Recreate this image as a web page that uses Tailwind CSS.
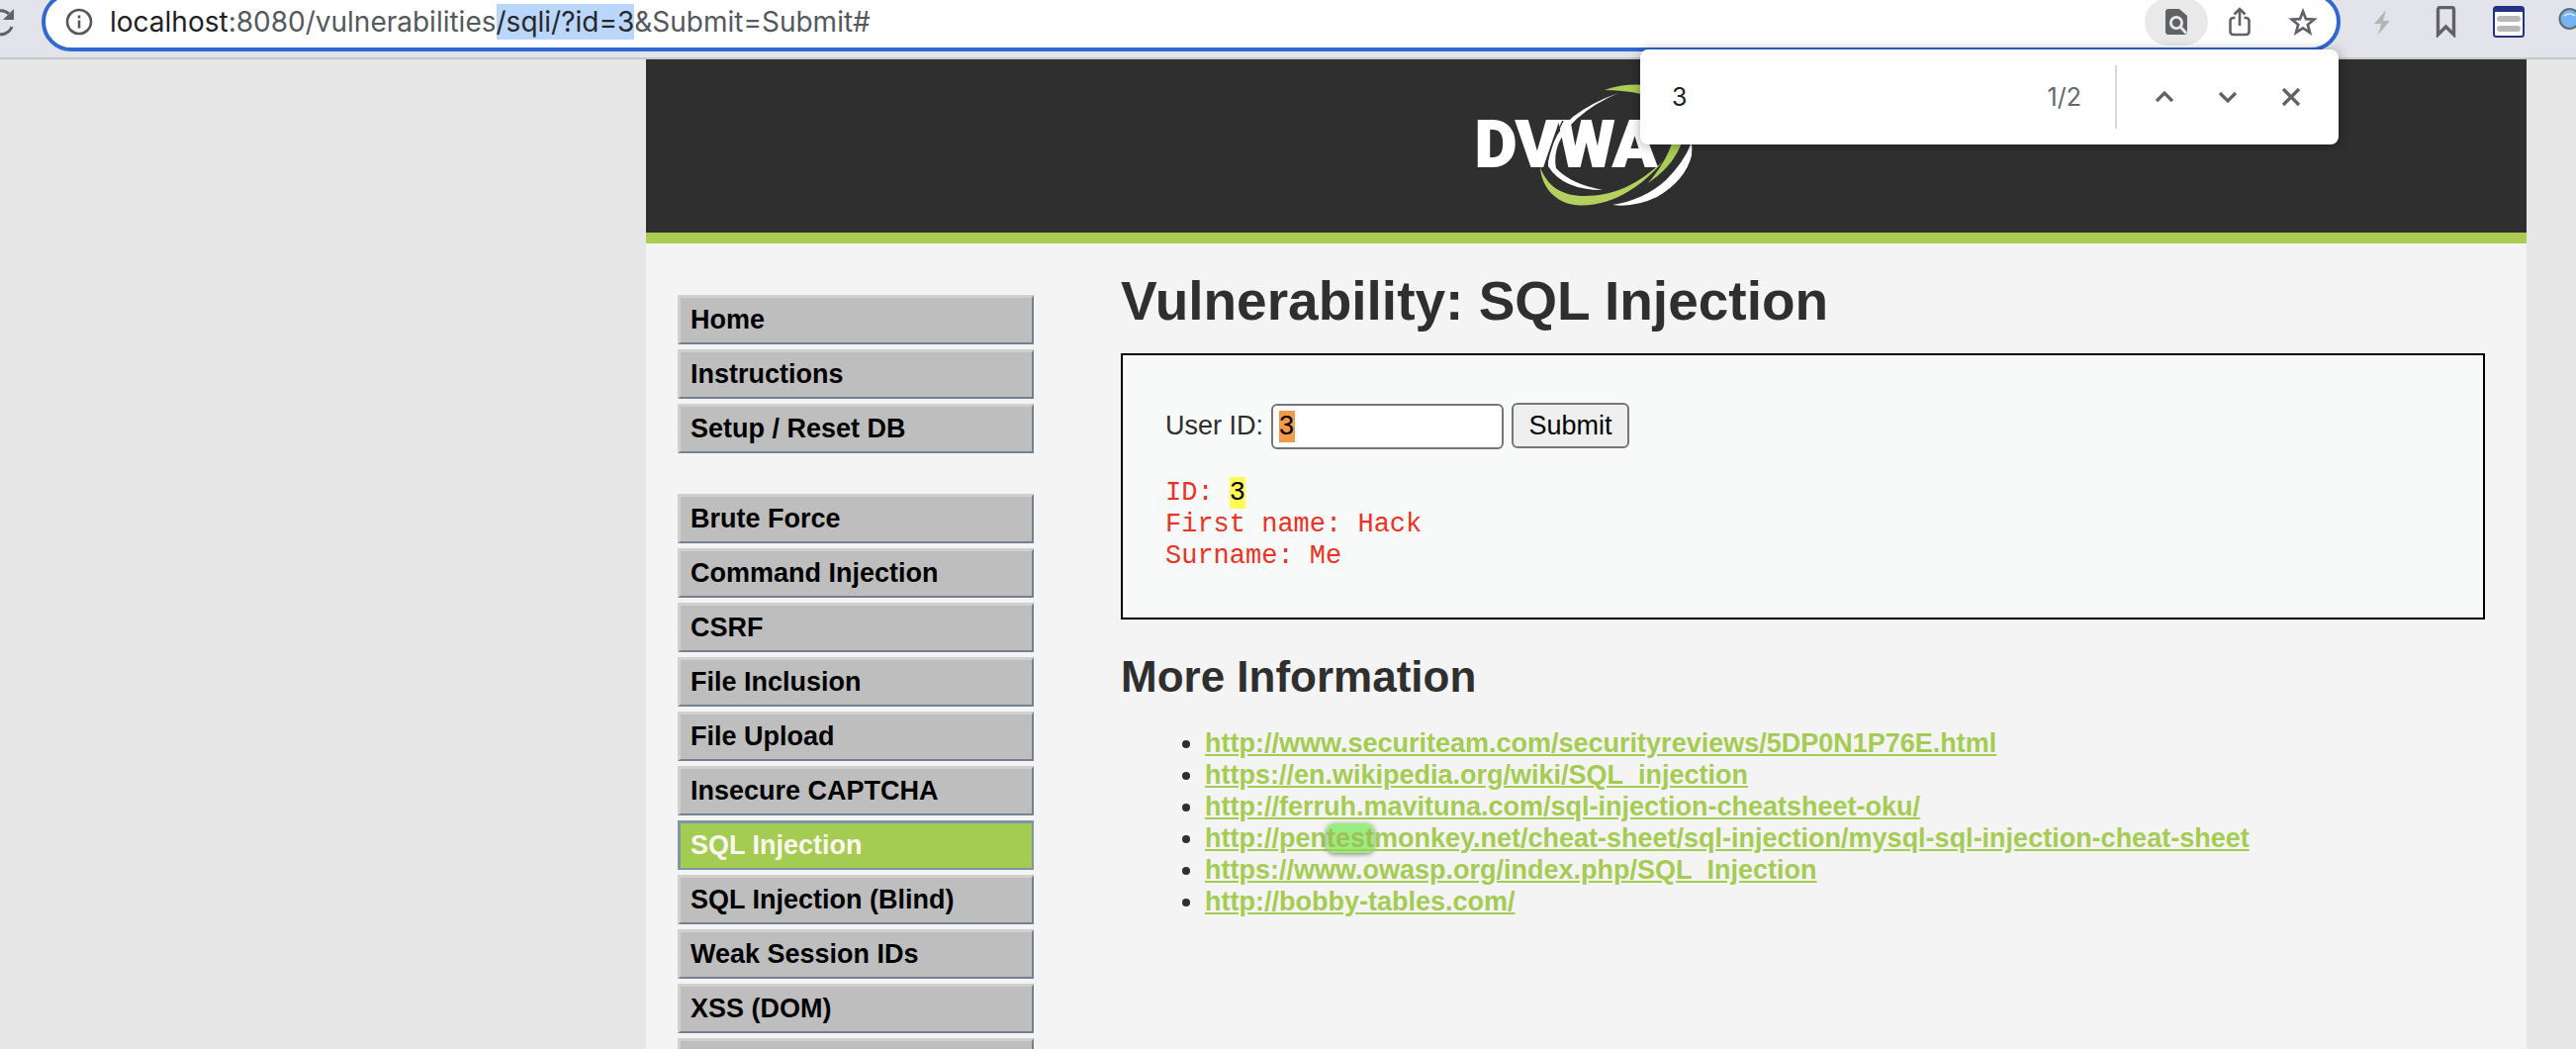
<!DOCTYPE html>
<html lang="en">
<head>
<meta charset="utf-8">
<title>Vulnerability: SQL Injection</title>
<script src="https://cdn.jsdelivr.net/npm/@tailwindcss/browser@4"></script>
</head>
<body class="flex h-screen flex-col overflow-hidden bg-[#e7e7e7] font-['Liberation_Sans',Arial,sans-serif] text-[27px] leading-8 text-[#2f2f2f]">

<!-- Browser toolbar -->
<div class="relative flex h-[60px] shrink-0 items-start border-b-2 border-[#c6c6cd] bg-[#e3e4eb] font-[Inter,sans-serif]">
  <button type="button" aria-label="Reload" class="h-11 w-[42px] shrink-0">
    <svg class="h-11 w-[42px]" viewBox="0 0 42 44" fill="none"><path d="M12 27A12 12 0 1 1 9 14" stroke="#5f6368" stroke-width="3"/><path d="M14 9v11H3z" fill="#5f6368"/></svg>
  </button>
  <div class="-mt-2 flex h-[60px] min-w-0 flex-1 items-center rounded-full border-4 border-[#3069cf] bg-white pr-0.5 pl-5">
    <button type="button" aria-label="View site information" class="mr-[17px] shrink-0">
      <svg class="size-7" viewBox="0 0 28 28" fill="none" stroke="#54575b"><circle cx="14" cy="14" r="12" stroke-width="2.6"/><path d="M14 12.5v8M14 7.5v3" stroke-width="2.6"/></svg>
    </button>
    <div role="textbox" contenteditable="true" spellcheck="false" aria-label="Address" class="flex-1 text-[28px] leading-9 whitespace-nowrap text-[#55585c] outline-none"><span class="text-[#1f2124]">localhost</span>:8080/vulnerabilities<span class="inline-block bg-[#bad6fb] text-[#26282c]">/sqli/?id=3</span>&amp;Submit=Submit#</div>
    <div class="flex shrink-0 items-center">
      <button type="button" aria-label="Find in page" class="flex h-12 w-16 items-center justify-center rounded-full bg-[#e9e9ea]">
        <svg class="size-8" viewBox="0 0 32 32"><path d="M8 3h11l8 7v16a3 3 0 0 1-3 3H8a3 3 0 0 1-3-3V6a3 3 0 0 1 3-3z" fill="#5f6368"/><circle cx="16" cy="17" r="5.6" fill="none" stroke="#e9e9ea" stroke-width="2.8"/><path d="M20 21l6 6.5" stroke="#e9e9ea" stroke-width="2.8"/></svg>
      </button>
      <button type="button" aria-label="Share" class="flex h-12 w-16 items-center justify-center">
        <svg class="size-8" viewBox="0 0 32 32" fill="none" stroke="#5f6368" stroke-width="2.6"><path d="M11.500 12H9.500a3 3 0 0 0-3 3v11a3 3 0 0 0 3 3h13a3 3 0 0 0 3-3V15a3 3 0 0 0-3-3h-2M16 20V4M10.500 8.500 16 3l5.500 5.500"/></svg>
      </button>
      <button type="button" aria-label="Bookmark this page" class="flex h-12 w-16 items-center justify-center">
        <svg class="size-8" viewBox="0 0 32 32" fill="none" stroke="#5f6368" stroke-width="2.7"><path d="M16 5.500l3 7.700 8.200.5-6.400 5.200 2.200 8-7-4.500-7 4.500 2.200-8-6.400-5.200 8.200-.5z"/></svg>
      </button>
    </div>
  </div>
  <div class="flex h-11 w-[238px] shrink-0 items-center overflow-hidden pl-[26px]">
    <button type="button" aria-label="Lightning extension" class="mr-8 shrink-0">
      <svg class="size-8" viewBox="0 0 32 32" fill="#b4b4b6"><path d="M20 4 8 18h7l-3 11 12-14h-7z"/></svg>
    </button>
    <button type="button" aria-label="Bookmark extension" class="mr-8 shrink-0">
      <svg class="size-8" viewBox="0 0 32 32" fill="none" stroke="#626262" stroke-width="3.4"><path d="M8.500 29V3.500a2 2 0 0 1 2-2h12a2 2 0 0 1 2 2V29l-8-8z"/></svg>
    </button>
    <button type="button" aria-label="Notes extension" class="mr-8 shrink-0">
      <svg class="size-8" viewBox="0 0 32 32"><rect x="1" y="1" width="30" height="30" rx="2.500" fill="#fff" stroke="#253187" stroke-width="2"/><path d="M1 1h30v5H1z" fill="#253187"/><path d="M7 13h18M7 23h18" stroke="#b8b8b8" stroke-width="6" stroke-linecap="round"/></svg>
    </button>
    <button type="button" aria-label="Search extension" class="shrink-0">
      <svg class="size-8" viewBox="0 0 32 32"><circle cx="13.500" cy="13" r="10" fill="#77b4f2" stroke="#5d6b78" stroke-width="2"/><path d="M8 10q5-4 11 0" fill="none" stroke="#d5e9ff" stroke-width="1.500"/></svg>
    </button>
  </div>

  <!-- Find bar floats over the page -->
  <div role="search" class="absolute top-[50px] right-[240px] z-10 flex h-24 w-[706px] items-center rounded-lg bg-white pr-4 pl-8 text-[25px] shadow-[0_1px_12px_rgba(0,0,0,0.35)]">
    <input type="text" aria-label="Find" value="3" class="min-w-0 flex-1 text-[#202124] outline-none">
    <output class="mr-[34px] text-[#66696d]">1/2</output>
    <div class="mr-4 h-16 w-0.5 bg-[#d9d9da]"></div>
    <button type="button" aria-label="Previous match" class="flex h-16 w-16 items-center justify-center"><svg class="size-8" viewBox="0 0 32 32" fill="none" stroke="#5f6368" stroke-width="3.200"><path d="M8 20l8-8 8 8"/></svg></button>
    <button type="button" aria-label="Next match" class="flex h-16 w-16 items-center justify-center"><svg class="size-8" viewBox="0 0 32 32" fill="none" stroke="#5f6368" stroke-width="3.200"><path d="M8 12l8 8 8-8"/></svg></button>
    <button type="button" aria-label="Close find bar" class="flex h-16 w-16 items-center justify-center"><svg class="size-8" viewBox="0 0 32 32" fill="none" stroke="#5f6368" stroke-width="3.200"><path d="M8 8l16 16M24 8 8 24"/></svg></button>
  </div>
</div>

<!-- Page -->
<div class="mr-[50px] ml-[653px] flex min-h-0 flex-1 flex-col bg-[#f4f4f4]">
  <header class="flex h-[186px] shrink-0 justify-center border-b-[11px] border-[#abcc50] bg-[#2f2f2f]">
    <svg class="h-[175px] w-[300px]" viewBox="-6 0 300 175" role="img" aria-label="DVWA">
      <path d="M176 34Q150 43 130 58Q104 82 105 108Q120 132 160 132Q128 126 113 110Q108 84 134 60Q152 44 176 34z" fill="#fff"/>
      <path d="M162 31Q182 24 204 26Q236 32 244 56Q246 98 206 125Q234 92 234 62Q226 32 162 31z" fill="#abcc55"/>
      <path d="M97 109C98 128 112 147 138 147.500C172 148 202 126 221 103C196 126 172 138 142 138C118 138 104 128 97 109z" fill="#b4d160"/>
      <path d="M249 86Q251 84 250 97Q244 122 215 139Q192 150 170 147Q202 142 224 122Q242 104 249 86z" fill="#fff"/>
      <text x="31" y="108" class="font-[Roboto,sans-serif] text-[65px] font-extrabold" fill="#fff" stroke="#fff" stroke-width="2">DVWA</text>
      <path d="M120 62Q108 84 103 108" fill="none" stroke="#2f2f2f" stroke-width="1.500"/>
    </svg>
  </header>

  <div class="flex min-h-0 flex-1 items-start pr-[42px] pl-8">
    <nav class="mt-[52px] mr-[88px] flex w-[360px] shrink-0 flex-col gap-[41px] text-[27px] font-bold text-black">
      <ul class="flex flex-col gap-[5px]">
        <li><a href="#" class="block h-[50px] border-t-3 border-r-2 border-b-2 border-l-3 border-t-[#d0d0d0] border-r-[#738093] border-b-[#738093] border-l-[#d0d0d0] bg-[#bebebe] px-[10px] py-[6px]">Home</a></li>
        <li><a href="#" class="block h-[50px] border-t-3 border-r-2 border-b-2 border-l-3 border-t-[#d0d0d0] border-r-[#738093] border-b-[#738093] border-l-[#d0d0d0] bg-[#bebebe] px-[10px] py-[6px]">Instructions</a></li>
        <li><a href="#" class="block h-[50px] border-t-3 border-r-2 border-b-2 border-l-3 border-t-[#d0d0d0] border-r-[#738093] border-b-[#738093] border-l-[#d0d0d0] bg-[#bebebe] px-[10px] py-[6px]">Setup / Reset DB</a></li>
      </ul>
      <ul class="flex flex-col gap-[5px]">
        <li><a href="#" class="block h-[50px] border-t-3 border-r-2 border-b-2 border-l-3 border-t-[#d0d0d0] border-r-[#738093] border-b-[#738093] border-l-[#d0d0d0] bg-[#bebebe] px-[10px] py-[6px]">Brute Force</a></li>
        <li><a href="#" class="block h-[50px] border-t-3 border-r-2 border-b-2 border-l-3 border-t-[#d0d0d0] border-r-[#738093] border-b-[#738093] border-l-[#d0d0d0] bg-[#bebebe] px-[10px] py-[6px]">Command Injection</a></li>
        <li><a href="#" class="block h-[50px] border-t-3 border-r-2 border-b-2 border-l-3 border-t-[#d0d0d0] border-r-[#738093] border-b-[#738093] border-l-[#d0d0d0] bg-[#bebebe] px-[10px] py-[6px]">CSRF</a></li>
        <li><a href="#" class="block h-[50px] border-t-3 border-r-2 border-b-2 border-l-3 border-t-[#d0d0d0] border-r-[#738093] border-b-[#738093] border-l-[#d0d0d0] bg-[#bebebe] px-[10px] py-[6px]">File Inclusion</a></li>
        <li><a href="#" class="block h-[50px] border-t-3 border-r-2 border-b-2 border-l-3 border-t-[#d0d0d0] border-r-[#738093] border-b-[#738093] border-l-[#d0d0d0] bg-[#bebebe] px-[10px] py-[6px]">File Upload</a></li>
        <li><a href="#" class="block h-[50px] border-t-3 border-r-2 border-b-2 border-l-3 border-t-[#d0d0d0] border-r-[#738093] border-b-[#738093] border-l-[#d0d0d0] bg-[#bebebe] px-[10px] py-[6px]">Insecure CAPTCHA</a></li>
        <li><a href="#" aria-current="page" class="block h-[50px] border-t-3 border-r-2 border-b-2 border-l-3 border-[#7f95a8] bg-[#a5cc52] px-[10px] py-[6px] text-[#faf8ee]">SQL Injection</a></li>
        <li><a href="#" class="block h-[50px] border-t-3 border-r-2 border-b-2 border-l-3 border-t-[#d0d0d0] border-r-[#738093] border-b-[#738093] border-l-[#d0d0d0] bg-[#bebebe] px-[10px] py-[6px]">SQL Injection (Blind)</a></li>
        <li><a href="#" class="block h-[50px] border-t-3 border-r-2 border-b-2 border-l-3 border-t-[#d0d0d0] border-r-[#738093] border-b-[#738093] border-l-[#d0d0d0] bg-[#bebebe] px-[10px] py-[6px]">Weak Session IDs</a></li>
        <li><a href="#" class="block h-[50px] border-t-3 border-r-2 border-b-2 border-l-3 border-t-[#d0d0d0] border-r-[#738093] border-b-[#738093] border-l-[#d0d0d0] bg-[#bebebe] px-[10px] py-[6px]">XSS (DOM)</a></li>
        <li><a href="#" aria-label="More" class="block h-[50px] border-t-3 border-r-2 border-b-2 border-l-3 border-t-[#d0d0d0] border-r-[#738093] border-b-[#738093] border-l-[#d0d0d0] bg-[#bebebe] px-[10px] py-[6px]"></a></li>
      </ul>
    </nav>

    <main class="min-w-0 flex-1 pt-7">
      <h1 class="text-[55px] leading-[60px] font-bold">Vulnerability: SQL Injection</h1>
      <div class="mt-[23px] flex h-[269px] flex-col border-2 border-black bg-[#f8faf9] px-[43px] pt-12">
        <form class="flex items-baseline gap-2">
          <label for="uid">User ID:</label>
          <input id="uid" type="text" value="3" class="h-[46px] w-[235px] rounded-md border-2 border-[#767676] bg-white bg-[linear-gradient(#f3994a,#f3994a)] bg-[length:16px_32px] bg-[position:6px_5px] bg-no-repeat px-[6px] text-black outline-none">
          <button type="submit" class="h-[46px] w-[119px] rounded-md border-2 border-[#767676] bg-[#efefef] text-black">Submit</button>
        </form>
        <pre class="mt-7 font-['Liberation_Mono',monospace] text-[27px] leading-8 text-[#ea3323]">ID: <mark class="inline-block bg-[#fffb54] text-black">3</mark>
First name: Hack
Surname: Me</pre>
      </div>
      <h2 class="mt-8 text-[44px] leading-[52px] font-bold">More Information</h2>
      <ul class="mt-[25px] list-disc pl-[85px]">
        <li><a href="http://www.securiteam.com/securityreviews/5DP0N1P76E.html" class="font-bold text-[#a5cc52] underline">http://www.securiteam.com/securityreviews/5DP0N1P76E.html</a></li>
        <li><a href="https://en.wikipedia.org/wiki/SQL_injection" class="font-bold text-[#a5cc52] underline">https://en.wikipedia.org/wiki/SQL_injection</a></li>
        <li><a href="http://ferruh.mavituna.com/sql-injection-cheatsheet-oku/" class="font-bold text-[#a5cc52] underline">http://ferruh.mavituna.com/sql-injection-cheatsheet-oku/</a></li>
        <li><a href="http://pentestmonkey.net/cheat-sheet/sql-injection/mysql-sql-injection-cheat-sheet" class="font-bold text-[#a5cc52] underline">http://pen<mark class="rounded-lg bg-[#98ee80] text-[#a0c056] shadow-[0_1px_5px_rgba(0,0,0,0.5)]">test</mark>monkey.net/cheat-sheet/sql-injection/mysql-sql-injection-cheat-sheet</a></li>
        <li><a href="https://www.owasp.org/index.php/SQL_Injection" class="font-bold text-[#a5cc52] underline">https://www.owasp.org/index.php/SQL_Injection</a></li>
        <li><a href="http://bobby-tables.com/" class="font-bold text-[#a5cc52] underline">http://bobby-tables.com/</a></li>
      </ul>
    </main>
  </div>
</div>
</body>
</html>
